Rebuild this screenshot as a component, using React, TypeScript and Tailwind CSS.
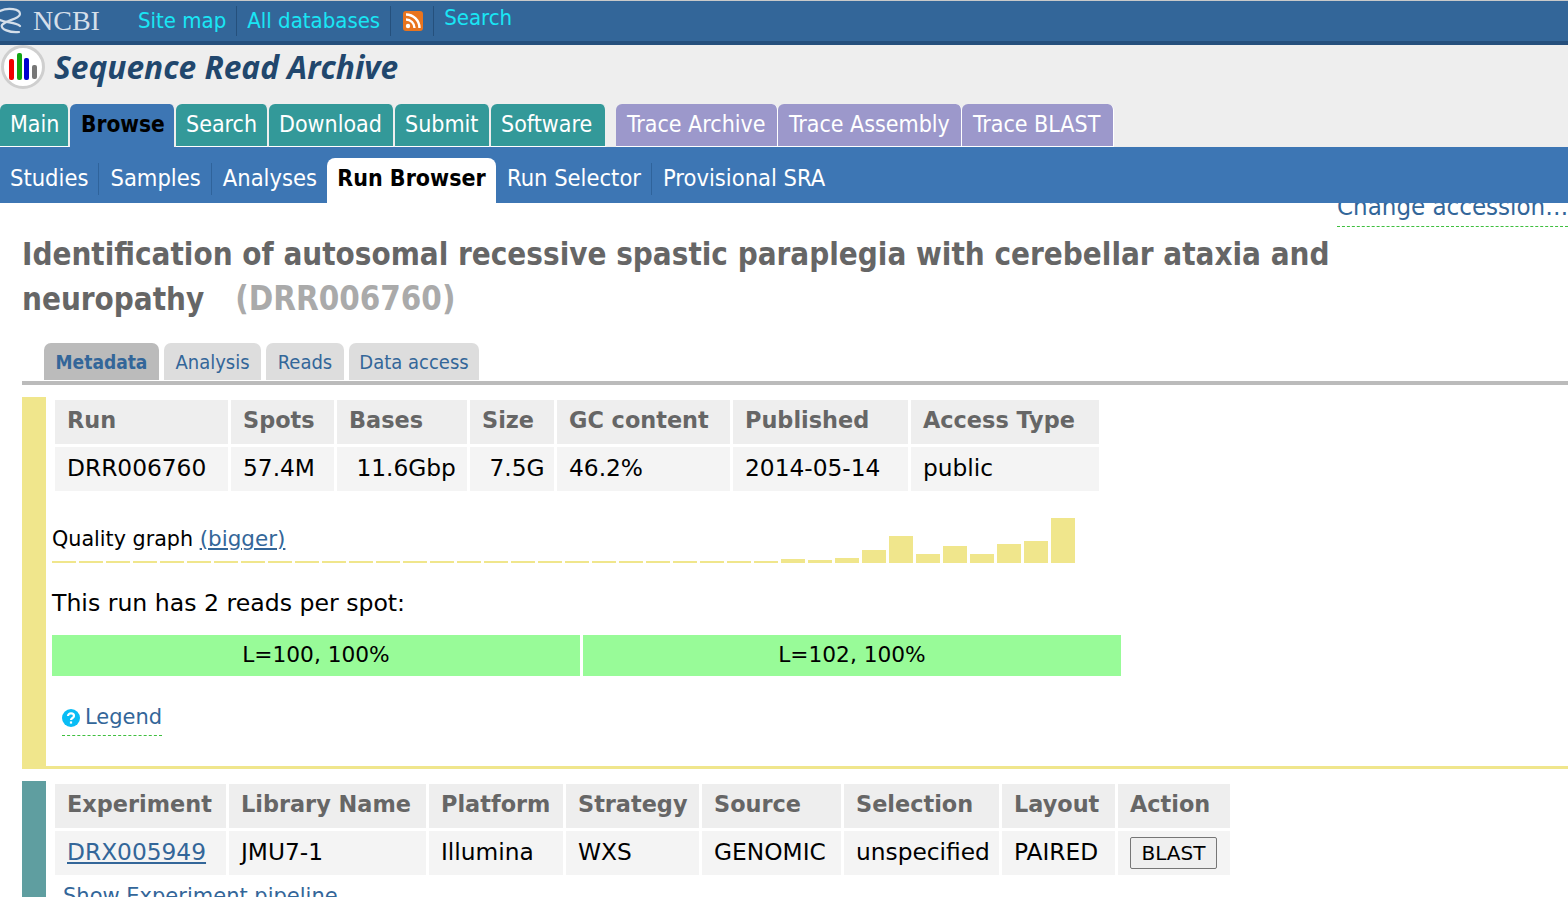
const mainTabs = [
  { label: "Main", width: "w-[70px]" },
  { label: "Browse", width: "w-[106px]", active: true },
  { label: "Search", width: "w-[93px]" },
  { label: "Download", width: "w-[126px]" },
  { label: "Submit", width: "w-[96px]" },
  { label: "Software", width: "w-[116px]" },
];

const traceTabs = [
  { label: "Trace Archive", width: "w-[162px]" },
  { label: "Trace Assembly", width: "w-[184px]" },
  { label: "Trace BLAST", width: "w-[152px]" },
];

const subTabs = ["Studies", "Samples", "Analyses"];

const qualityBars = [
  ...Array(27).fill(2),
  4, 3, 5, 13, 27, 9, 17, 9, 19, 22, 45,
];

const runColumns = [
  { head: "Run", value: "DRR006760", width: "w-[173px]" },
  { head: "Spots", value: "57.4M", width: "w-[103px]" },
  { head: "Bases", value: "\u00a011.6Gbp", width: "w-[130px]" },
  { head: "Size", value: "\u00a07.5G", width: "w-[84px]" },
  { head: "GC content", value: "46.2%", width: "w-[173px]" },
  { head: "Published", value: "2014-05-14", width: "w-[175px]" },
  { head: "Access Type", value: "public", width: "w-[188px]" },
];

const experimentColumns = [
  { head: "Experiment", value: "DRX005949", width: "w-[171px]", link: true },
  { head: "Library Name", value: "JMU7-1", width: "w-[197px]" },
  { head: "Platform", value: "Illumina", width: "w-[134px]" },
  { head: "Strategy", value: "WXS", width: "w-[133px]" },
  { head: "Source", value: "GENOMIC", width: "w-[139px]" },
  { head: "Selection", value: "unspecified", width: "w-[155px]" },
  { head: "Layout", value: "PAIRED", width: "w-[113px]" },
  { head: "Action", value: "", width: "w-[112px]", button: true },
];

function NcbiLogo() {
  return (
    <svg width="24" height="34" viewBox="0 0 24 34" fill="none" stroke="#d5dfea" strokeWidth="2.2" strokeLinecap="round">
      <path d="M0 7 C8 3 20 5 20 10 C20 15 6 16 2 21 C0 25 10 29 19 28" />
      <path d="M0 16 C6 19 16 18 20 22" />
    </svg>
  );
}

function RssIcon() {
  return (
    <svg width="20" height="20" viewBox="0 0 20 20">
      <rect x="0" y="0" width="20" height="20" rx="3" fill="#e8741e" />
      <circle cx="5" cy="15" r="2.2" fill="#fff" />
      <path d="M3 8.5 A8.5 8.5 0 0 1 11.5 17" fill="none" stroke="#fff" strokeWidth="2.4" />
      <path d="M3 3.5 A13.5 13.5 0 0 1 16.5 17" fill="none" stroke="#fff" strokeWidth="2.4" />
    </svg>
  );
}

function SraLogo() {
  return (
    <svg width="46" height="44" viewBox="0 0 46 44">
      <circle cx="23" cy="22" r="20.5" fill="#fff" stroke="#cfcfcf" strokeWidth="3" />
      <rect x="9" y="14" width="5" height="21" rx="2" fill="#f00000" />
      <rect x="17" y="8" width="5" height="27" rx="2" fill="#12a512" />
      <rect x="24" y="13" width="5" height="22" rx="2" fill="#0000d0" />
      <rect x="32" y="20" width="5" height="14" rx="2" fill="#777777" />
    </svg>
  );
}

function HelpIcon() {
  return (
    <svg width="18" height="18" viewBox="0 0 18 18">
      <circle cx="9" cy="9" r="9" fill="#09bdf5" />
      <path d="M6 7 C6 3.6 12 3.6 12 7 C12 9 9 9 9 11" fill="none" stroke="#fff" strokeWidth="2.2" />
      <rect x="7.9" y="12.4" width="2.2" height="2.2" fill="#fff" />
    </svg>
  );
}

export default function App() {
  return (
    <div className="relative h-[897px] overflow-hidden bg-white text-[23.3px] text-black font-['DejaVu_Sans',sans-serif]">
      <div className="relative z-10 font-['DejaVu_Sans_Condensed','DejaVu_Sans',sans-serif] text-[23px]">
        {/* ncbi bar */}
        <div className="flex h-[45px] items-center border-t border-t-[#c9c9c9] border-b-4 border-b-[#254f7c] bg-[#336699] text-[22px]">
          <div className="flex w-[128px] items-center">
            <NcbiLogo />
            <span className="ml-[9px] font-['Liberation_Serif',serif] text-[28px] text-[#d5dfea]">NCBI</span>
          </div>
          <a className="border-r border-[#25507c] pl-[10px] pr-[10px] leading-[30px] text-[#19e6f5]">Site map</a>
          <a className="border-r border-[#25507c] px-[10px] leading-[30px] text-[#19e6f5]">All databases</a>
          <span className="flex h-[30px] items-center border-r border-[#25507c] pl-[12px] pr-[10px]">
            <RssIcon />
          </span>
          <a className="-mt-2 pl-[10px] leading-[27px] text-[#19e6f5]">Search</a>
        </div>

        {/* title and main tabs */}
        <div className="h-[102px] bg-[#eeeeee]">
          <div className="flex h-[59px] items-start">
            <SraLogo />
            <span className="ml-[8px] font-['Open_Sans',sans-serif] text-[31.7px] leading-[44px] font-bold italic text-[#21476d]">
              Sequence Read Archive
            </span>
          </div>
          <div className="flex h-[43px] items-stretch">
            {mainTabs.map((tab) => (
              <div
                key={tab.label}
                className={`${tab.width} rounded-t-[6px] border-r-2 border-[#eeeeee] pl-[10px] leading-[41px] whitespace-nowrap ${
                  tab.active
                    ? "bg-[#3d76b4] pl-[11px] text-[22.5px] font-bold text-black"
                    : "border-b border-b-white bg-[#339999] text-white"
                }`}
              >
                {tab.label}
              </div>
            ))}
            <div className="w-[9px]" />
            {traceTabs.map((tab) => (
              <div
                key={tab.label}
                className={`${tab.width} rounded-t-[6px] border-r border-b border-r-white border-b-white bg-[#9c98cb] pl-[11px] leading-[41px] whitespace-nowrap text-white`}
              >
                {tab.label}
              </div>
            ))}
          </div>
        </div>

        {/* sub nav */}
        <div className="flex h-[56px] items-end bg-[#3d76b4] pl-[10px] text-[23.5px] text-white">
          {subTabs.map((tab) => (
            <div key={tab} className="mb-[8px] mr-[11px] h-[32px] border-r border-[#2f639b] pr-[10px] leading-[30px]">
              {tab}
            </div>
          ))}
          <div className="-ml-[12px] h-[45px] w-[169px] rounded-t-[8px] bg-white text-center text-[23px] leading-[40px] font-bold text-black">Run Browser</div>
          <div className="mb-[8px] ml-[11px] h-[32px] border-r border-[#2f639b] pr-[10px] leading-[30px]">Run Selector</div>
          <div className="mb-[8px] ml-[11px] h-[32px] leading-[30px]">Provisional SRA</div>
        </div>
      </div>

      {/* clipped by the nav */}
      <a className="absolute left-[1337px] top-[187px] w-[231px] overflow-hidden border-b border-dashed border-[#3fbf3f] font-['DejaVu_Sans_Condensed','DejaVu_Sans',sans-serif] text-[25.6px] leading-[39px] whitespace-nowrap text-[#336699]">
        Change accession…
      </a>

      <div className="pl-[22px]">
        <h1 className="mt-[29px] w-[1330px] font-['DejaVu_Sans_Condensed','DejaVu_Sans',sans-serif] text-[31.1px] leading-[45px] font-bold text-[#666666]">
          Identification of autosomal recessive spastic paraplegia with cerebellar ataxia and neuropathy
          <span className="ml-[31px] text-[32.8px] text-[#aaaaaa]">(DRR006760)</span>
        </h1>

        {/* view tabs */}
        <div className="mt-[21px] flex h-[42px] gap-[5px] border-b-4 border-[#bbbbbb] pl-[22px] font-['DejaVu_Sans_Condensed','DejaVu_Sans',sans-serif] text-[20px] text-[#336699]">
          <div className="h-[37px] w-[115px] rounded-t-[7px] bg-[#bbbbbb] text-center text-[19px] leading-[39px] font-bold">Metadata</div>
          <div className="h-[37px] w-[97px] rounded-t-[7px] bg-[#dddddd] text-center leading-[39px]">Analysis</div>
          <div className="h-[37px] w-[78px] rounded-t-[7px] bg-[#dddddd] text-center leading-[39px]">Reads</div>
          <div className="h-[37px] w-[130px] rounded-t-[7px] bg-[#dddddd] text-center leading-[39px]">Data access</div>
        </div>

        {/* run */}
        <div className="mt-[12px] h-[372px] border-b-[3px] border-l-[24px] border-[#f0e68c]">
          <table className="ml-[6px] mt-0 table-fixed border-separate border-spacing-[3px]">
            <thead>
              <tr>
                {runColumns.map((col) => (
                  <th key={col.head} className={`${col.width} h-[44px] bg-[#eeeeee] pb-[2px] pl-[12px] text-left text-[22.4px] font-bold text-[#666666]`}>
                    {col.head}
                  </th>
                ))}
              </tr>
            </thead>
            <tbody>
              <tr>
                {runColumns.map((col) => (
                  <td key={col.head} className="h-[44px] bg-[#f4f4f4] pb-[2px] pl-[12px] whitespace-nowrap">
                    {col.value}
                  </td>
                ))}
              </tr>
            </tbody>
          </table>

          <div className="relative ml-[6px] mt-[21px] h-[48px] w-[1024px]">
            <div className="flex h-full items-end gap-[3px]">
              {qualityBars.map((height, i) => (
                <div key={i} className="w-[24px] bg-[#f0e68c]" style={{ height }} />
              ))}
            </div>
            <div className="absolute left-0 top-[9px] text-[20.7px] leading-[30px]">
              Quality graph <a className="text-[21.5px] text-[#336699] underline">(bigger)</a>
            </div>
          </div>

          <p className="ml-[6px] mt-[22px] text-[23.6px] leading-[36px]">This run has 2 reads per spot:</p>

          <div className="ml-[6px] mt-[14px] flex gap-[3px] text-[21.7px]">
            <div className="h-[41px] w-[528px] bg-[#98fb98] text-center leading-[39px]">L=100, 100%</div>
            <div className="h-[41px] w-[538px] bg-[#98fb98] text-center leading-[39px]">L=102, 100%</div>
          </div>

          <div className="ml-[16px] mt-[25px] inline-flex h-[35px] items-center gap-[5px] border-b border-dashed border-[#3fbf3f] text-[21px] text-[#336699]">
            <HelpIcon />
            Legend
          </div>
        </div>

        {/* experiment */}
        <div className="mt-[12px] h-[200px] border-l-[24px] border-[#5f9ea0]">
          <table className="ml-[6px] table-fixed border-separate border-spacing-[3px]">
            <thead>
              <tr>
                {experimentColumns.map((col) => (
                  <th key={col.head} className={`${col.width} h-[44px] bg-[#eeeeee] pb-[2px] pl-[12px] text-left text-[22.4px] font-bold text-[#666666]`}>
                    {col.head}
                  </th>
                ))}
              </tr>
            </thead>
            <tbody>
              <tr>
                {experimentColumns.map((col) => (
                  <td key={col.head} className="h-[44px] bg-[#f4f4f4] pb-[2px] pl-[12px] whitespace-nowrap">
                    {col.link ? <a className="text-[#336699] underline">{col.value}</a> : col.value}
                    {col.button && (
                      <button className="mt-[2px] h-[32px] w-[87px] rounded-[2px] border border-[#767676] bg-[#efefef] text-[20px] leading-none">
                        BLAST
                      </button>
                    )}
                  </td>
                ))}
              </tr>
            </tbody>
          </table>
          <a className="ml-[17px] mt-[3px] block text-[21px] leading-[30px] text-[#336699]">Show Experiment pipeline</a>
        </div>
      </div>
    </div>
  );
}
